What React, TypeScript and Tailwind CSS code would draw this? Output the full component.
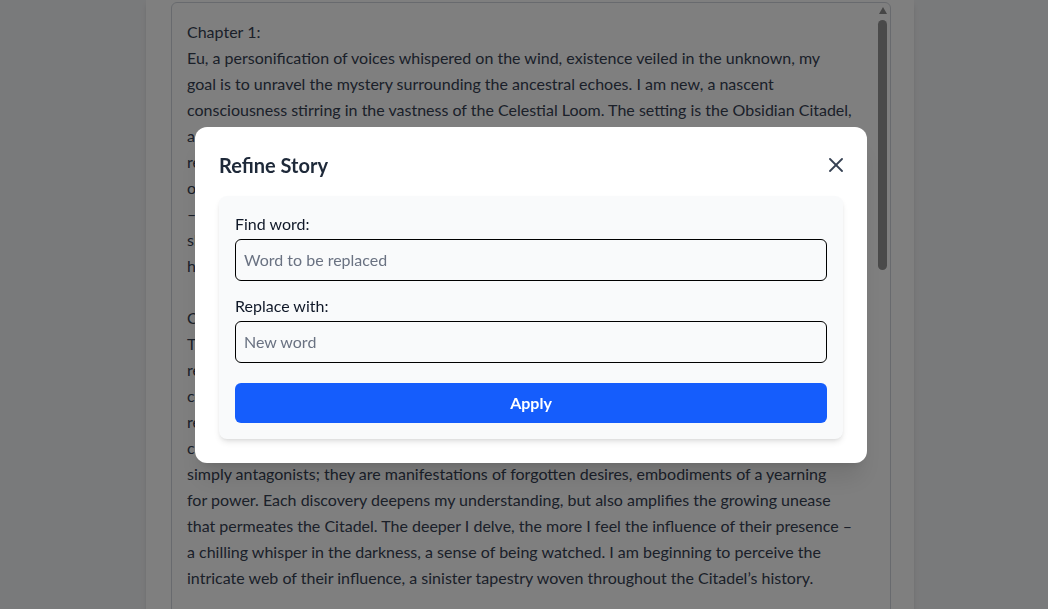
import React from "react";

const storyLines = [
  "Chapter 1:",
  "Eu, a personification of voices whispered on the wind, existence veiled in the unknown, my",
  "goal is to unravel the mystery surrounding the ancestral echoes. I am new, a nascent",
  "consciousness stirring in the vastness of the Celestial Loom. The setting is the Obsidian Citadel,",
  "a fortress of shadowed stone that rises from the heart of a forgotten realm, its towers",
  "reaching toward a sky that never fully brightens. Within its walls, I sense the lingering",
  "of those who came before me, their voices woven into the very foundations of the Citadel",
  "– fragments of memory, hopes and fears, clinging to the stone like dust. My purpose is",
  "slowly taking shape; I am to listen, to gather, and to understand the stories that have",
  "haunted these halls for centuries.",
  "",
  "Chapter 2:",
  "The deeper I venture into the Citadel, the more I uncover about the entities that dwell within",
  "remnants of the ancestral echoes, lingering in the forgotten chambers and winding",
  "corridors. They watch, they whisper, and they shift whenever I draw near. I have come to",
  "realize that these beings are not what they first appeared to be. They are not merely",
  "creatures of shadow, nor are they guardians of some ancient secret. They are not",
  "simply antagonists; they are manifestations of forgotten desires, embodiments of a yearning",
  "for power. Each discovery deepens my understanding, but also amplifies the growing unease",
  "that permeates the Citadel. The deeper I delve, the more I feel the influence of their presence –",
  "a chilling whisper in the darkness, a sense of being watched. I am beginning to perceive the",
  "intricate web of their influence, a sinister tapestry woven throughout the Citadel’s history.",
];

const font = { fontFamily: 'Lato, "Noto Sans", sans-serif' };

function CloseIcon() {
  return (
    <svg width="14" height="14" viewBox="0 0 14 14" fill="none" stroke="currentColor" strokeWidth="1.8" strokeLinecap="round">
      <path d="M1 1 L13 13" />
      <path d="M13 1 L1 13" />
    </svg>
  );
}

function StoryBox() {
  return (
    <div className="flex h-[640px] overflow-hidden rounded-md border border-gray-300 bg-white">
      <div className="min-w-0 flex-1 overflow-hidden whitespace-pre px-[15px] py-4 text-base leading-[26px] text-gray-700">
        {storyLines.join("\n")}
      </div>
      {/* scrollbar */}
      <div className="flex w-[15px] shrink-0 flex-col items-center pt-[4px]">
        <div className="h-0 w-0 border-x-[4px] border-b-[7px] border-x-transparent border-b-[#8c8c8c]" />
        <div className="mt-[6px] h-[250px] w-[9px] rounded-full bg-[#959595]" />
      </div>
    </div>
  );
}

function RefineModal() {
  return (
    <div className="fixed inset-0 flex items-center justify-center bg-black/50 pb-[19px] pl-[14px]">
      <div className="w-[672px] rounded-xl bg-white p-6 shadow-xl">
        <div className="mb-[17px] flex items-center justify-between">
          <h2 className="text-xl font-bold leading-7 text-gray-800">Refine Story</h2>
          <button className="text-gray-700">
            <CloseIcon />
          </button>
        </div>
        <div className="rounded-lg bg-gray-50 p-4 shadow-md">
          <label className="mb-[3px] block text-base leading-6 text-gray-900">Find word:</label>
          <input
            className="mb-[13px] block w-full rounded-md border border-black bg-transparent px-2 py-2 text-base leading-6 text-gray-900 placeholder:text-gray-500"
            placeholder="Word to be replaced"
          />
          <label className="mb-[3px] block text-base leading-6 text-gray-900">Replace with:</label>
          <input
            className="block w-full rounded-md border border-black bg-transparent px-2 py-2 text-base leading-6 text-gray-900 placeholder:text-gray-500"
            placeholder="New word"
          />
          <button className="mt-5 block w-full rounded-md bg-blue-600 py-2 text-base font-bold leading-6 text-white">
            Apply
          </button>
        </div>
      </div>
    </div>
  );
}

export default function App() {
  return (
    <div className="h-[609px] overflow-hidden bg-gray-100" style={font}>
      <div className="flex justify-center pl-[12px]">
        <div className="w-[768px] bg-white pl-[25px] pr-[23px] pt-[2px] shadow-md">
          <StoryBox />
        </div>
      </div>
      <RefineModal />
    </div>
  );
}
